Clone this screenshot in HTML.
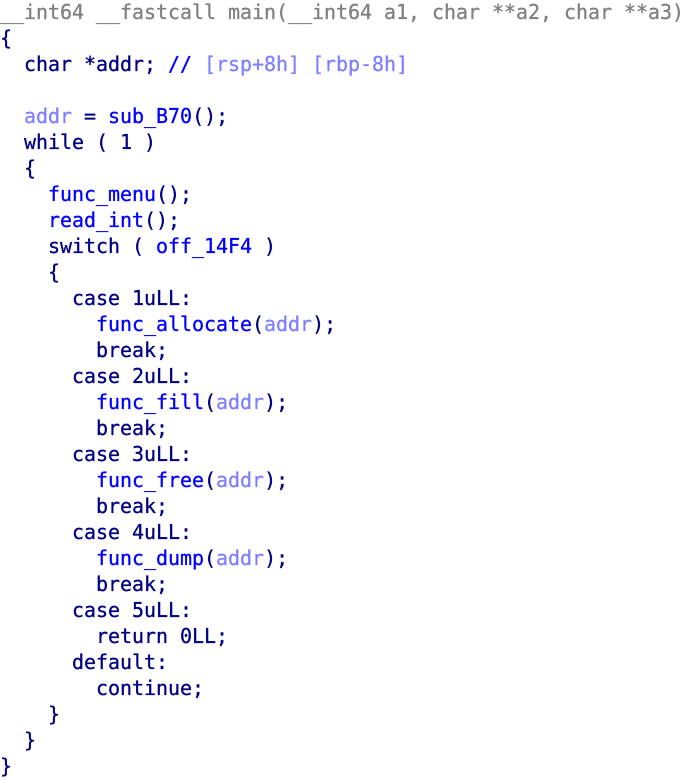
<!DOCTYPE html>
<html><head><meta charset="utf-8"><style>
html,body{margin:0;padding:0;background:#fff;width:684px;height:780px;overflow:hidden}
pre{margin:0;padding:0;position:relative;top:-1px;font-family:"DejaVu Sans Mono","Liberation Mono",monospace;font-size:20px;line-height:26px;color:#000080;white-space:pre;letter-spacing:-0.04px;-webkit-text-stroke:0.3px currentColor}
.g{color:#808080}.b{color:#0000ff}.v{color:#8080ff}
</style></head><body><pre><span class="g">__int64 __fastcall main(__int64 a1, char **a2, char **a3)</span>
{
  char *addr; <span class="b">//</span> <span class="v">[rsp+8h] [rbp-8h]</span>

  <span class="v">addr</span> = <span class="b">sub_B70</span>();
  while ( 1 )
  {
    <span class="b">func_menu</span>();
    <span class="b">read_int</span>();
    switch ( <span class="b">off_14F4</span> )
    {
      case 1uLL:
        <span class="b">func_allocate</span>(<span class="v">addr</span>);
        break;
      case 2uLL:
        <span class="b">func_fill</span>(<span class="v">addr</span>);
        break;
      case 3uLL:
        <span class="b">func_free</span>(<span class="v">addr</span>);
        break;
      case 4uLL:
        <span class="b">func_dump</span>(<span class="v">addr</span>);
        break;
      case 5uLL:
        return 0LL;
      default:
        continue;
    }
  }
}</pre></body></html>
